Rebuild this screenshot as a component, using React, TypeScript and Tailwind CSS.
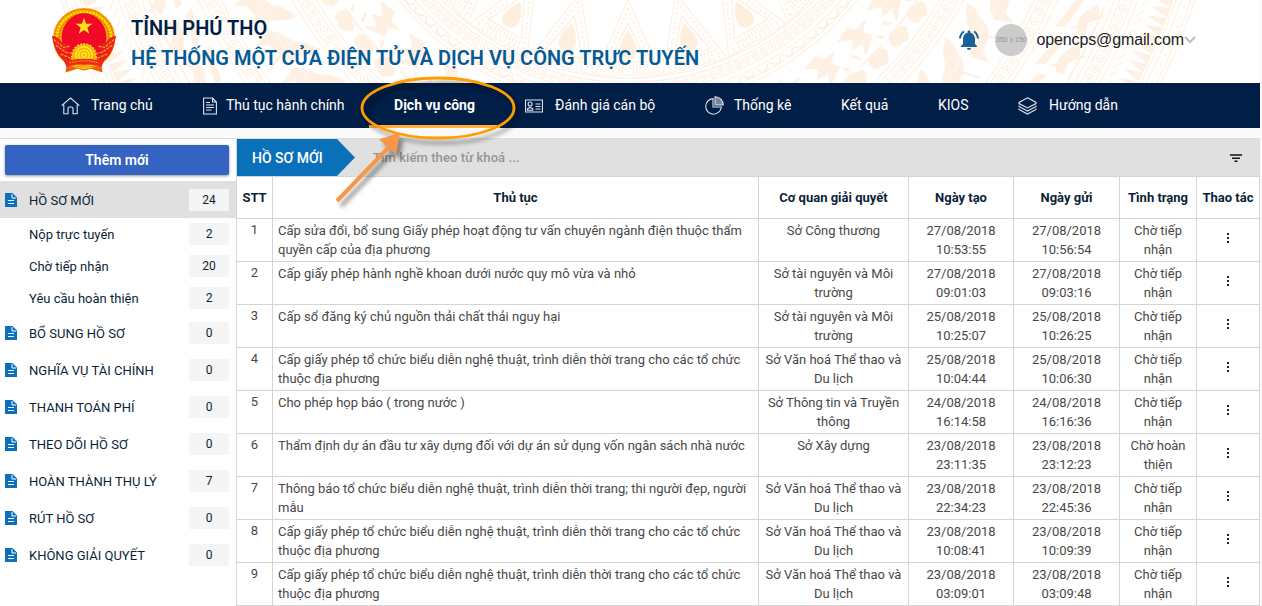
import React from "react";

const CX = 628;
const CY = -184;

function polar(r: number, deg: number): [number, number] {
  const a = (deg * Math.PI) / 180;
  return [CX + r * Math.sin(a), CY + r * Math.cos(a)];
}

function angles(step: number, max: number): number[] {
  const out: number[] = [];
  for (let a = -max; a <= max + 0.001; a += step) out.push(a);
  return out;
}

function Ring({ r, children, step, max = 74 }: { r: number; step: number; max?: number; children: React.ReactNode }) {
  return (
    <>
      {angles(step, max).map((a) => {
        const [x, y] = polar(r, a);
        if (y < -80 || y > 110) return null;
        return (
          <g key={a} transform={`translate(${x.toFixed(1)} ${y.toFixed(1)}) rotate(${(-a).toFixed(1)})`}>
            {children}
          </g>
        );
      })}
    </>
  );
}

function DrumPattern() {
  return (
    <svg className="absolute inset-0" width="1260" height="83" viewBox="0 0 1260 83" fill="none" stroke="#fef1e3" strokeWidth="1.2">
      {[262, 266, 277, 282, 290, 294, 362, 366, 378, 383, 446, 450, 462, 467, 520, 525, 537, 542, 578, 583, 592, 596].map((r) => (
        <circle key={r} cx={CX} cy={CY} r={r} />
      ))}
      <circle cx={CX} cy={CY} r="342" strokeWidth="2" strokeDasharray="30 12" />
      <Ring r={185} step={15} max={60}>
        <path d="M0 -2 L-33 74 H33 Z" />
        <path d="M0 8 L-27 71 H27 Z" strokeWidth="2.4" strokeDasharray="2 3" />
        <path d="M0 22 L-19 61 H19 Z" strokeWidth="1.5" />
        <path d="M0 30 C-12 48 -10 56 0 58 C10 56 12 48 0 30" fill="#feeedd" />
        <path d="M-20 66 H20" strokeWidth="6" strokeDasharray="1.5 2" />
      </Ring>
      <Ring r={271.5} step={2}>
        <circle r="3.4" />
        <circle r="1" />
      </Ring>
      <Ring r={286} step={3}>
        <path d="M-6 -2 L-2 3 H3 L7 -2" strokeWidth="2" />
      </Ring>
      <Ring r={322} step={8}>
        <path d="M-16 -14 L-4 -5 L-12 2 L0 4 L-7 15 L12 6 L7 -3 L17 -9 L4 -9 L0 -17 Z" fill="#fef1e3" />
        <path d="M14 10 L19 16 M-18 5 L-13 14" strokeWidth="3" />
      </Ring>
      <Ring r={350} step={5}>
        <path d="M-10 -5 C-14 2 -9 8 -3 5 C0 10 7 8 8 3 C14 1 10 -8 4 -6 C0 -11 -8 -10 -10 -5Z" fill="#fef1e3" strokeDasharray="2 1" />
      </Ring>
      <Ring r={372} step={1.6}>
        <circle r="3.6" />
        <circle r="1" />
      </Ring>
      <Ring r={414} step={6}>
        <path d="M-22 6 C-14 -8 -4 -4 2 -12 C8 -22 16 -22 20 -26 C22 -16 14 -12 13 -3 C10 8 -4 10 -12 10 L-18 22 M4 8 L10 24" fill="#fef1e3" strokeWidth="2.5" />
        <path d="M-18 0 C-8 0 4 2 12 -4" stroke="#fff" strokeDasharray="2 2" />
      </Ring>
      <Ring r={456} step={1.4}>
        <circle r="3.8" />
        <circle r="1.1" />
      </Ring>
      <Ring r={495} step={5}>
        <path d="M-18 -18 L16 -10 L18 -4 L-14 -10 Z M-16 4 C-4 -4 10 2 18 12 L8 16 C2 8 -6 8 -14 12 Z" fill="#fef1e3" />
        <path d="M-20 18 H20 M-14 -4 L12 22" strokeWidth="2" />
      </Ring>
      <Ring r={531} step={1.2}>
        <circle r="3.8" />
        <circle r="1.1" />
      </Ring>
      <Ring r={560} step={1}>
        <path d="M-4 15 L0 -2 L4 15 Z" fill="#fef1e3" />
        <path d="M-4 -14 L4 -8" />
      </Ring>
      <Ring r={588} step={1}>
        <circle r="0.8" />
      </Ring>
    </svg>
  );
}

function Emblem() {
  return (
    <svg width="68" height="68" viewBox="-1 -1.5 70 70" className="shrink-0">
      <path d="M17 50 L15 67 L27 63 L34 65 L41 63 L53 67 L51 50 Z" fill="#f25a12" />
      <ellipse cx="34" cy="32" rx="32" ry="31.5" fill="#f7a600" />
      <ellipse cx="34" cy="32" rx="30.5" ry="30" fill="none" stroke="#f04a10" strokeWidth="1" strokeDasharray="1.5 1.7" />
      <ellipse cx="34" cy="32" rx="28" ry="27.5" fill="none" stroke="#fff200" strokeWidth="2" strokeDasharray="2 1.4" />
      <ellipse cx="34" cy="32" rx="25.8" ry="25.4" fill="none" stroke="#e33a10" strokeWidth="1" strokeDasharray="2 1.5" />
      <ellipse cx="34" cy="31" rx="23" ry="25" fill="#f00a28" />
      <path d="M34 10.5 L36.1 16.7 H42.8 L37.4 20.6 L39.4 27 L34 23.2 L28.6 27 L30.6 20.6 L25.2 16.7 H31.9 Z" fill="#ffe21c" />
      <path d="M1 29 Q8 30 11 36 L21 39 L16 45 L22 50 L17 57 Q4 50 1 29Z M67 29 Q60 30 57 36 L47 39 L52 45 L46 50 L51 57 Q64 50 67 29Z" fill="#ee1c20" />
      <path d="M3 33 L13 41 L19 40 M5 39 L15 46 L21 47 M65 33 L55 41 L49 40 M63 39 L53 46 L47 47 M10 48 L20 52 M58 48 L48 52" stroke="#f9a51a" strokeWidth="1.3" fill="none" strokeDasharray="3 1" />
      <circle cx="34" cy="50" r="12.5" fill="#f9b010" stroke="#ffd91a" strokeWidth="1.6" strokeDasharray="2 1.4" />
      <g fill="none" stroke="#fff01f" strokeWidth="1.4">
        <circle cx="34" cy="49" r="8.5" />
        <circle cx="34" cy="49" r="5.4" />
        <circle cx="34" cy="49" r="2.3" />
      </g>
      <path d="M12 52 Q22 55 26 53 H42 Q46 55 56 52 L52 61 Q43 58 34 59 Q25 58 16 61 Z" fill="#ed2a18" />
      <path d="M19 57 Q34 53 49 57" stroke="#f59a18" strokeWidth="1.3" strokeDasharray="1.5 1" fill="none" />
      <path d="M25 61 H43" stroke="#f9a51a" strokeWidth="1.8" strokeDasharray="2 1" />
    </svg>
  );
}

const iconProps = {
  fill: "none",
  stroke: "#dfe5ef",
  strokeWidth: 1.1,
  className: "shrink-0",
};

const HomeIcon = () => (
  <svg width="19" height="18" viewBox="0 0 19 18" {...iconProps}>
    <path d="M0.6 8.6 L9.5 1 L18.4 8.6 M2.8 7.5 V16.7 H7 V11.5 Q7 10 8.5 10 H10.5 Q12 10 12 11.5 V16.7 H16.2 V7.5" />
  </svg>
);
const DocIcon = () => (
  <svg width="14" height="18" viewBox="0 0 14 18" {...iconProps}>
    <path d="M0.6 1 H9.5 L13.4 5 V17 H0.6 Z M9.5 1 V5 H13.4 M3 5.5 H7 M3 8 H11 M3 10.5 H11 M3 13 H8.5" />
  </svg>
);
const CardIcon = () => (
  <svg width="18" height="14" viewBox="0 0 18 14" {...iconProps}>
    <path d="M0.5 1 H17.5 V13 H0.5 Z M10.5 5 H15.5 M10.5 7.5 H15.5 M10.5 10 H15.5 M2.5 11.2 V9.8 L5 8.4 L7.8 9.8 V11.2 Z" />
    <circle cx="5.1" cy="5" r="2" />
  </svg>
);
const PieIcon = () => (
  <svg width="19" height="19" viewBox="0 0 19 19" {...iconProps}>
    <path d="M8 2.6 A7.8 7.8 0 1 0 16.3 11 H8 Z" />
    <path d="M10 0.8 A8 8 0 0 1 18.2 9 H10 Z" fill="#77849c" />
  </svg>
);
const LayersIcon = () => (
  <svg width="19" height="18" viewBox="0 0 19 18" {...iconProps}>
    <path d="M9.5 0.8 L18 5.4 V6.6 L9.5 11 L1 6.6 V5.4 Z M1 8.4 V9.4 L9.5 14 L18 9.4 V8.4 M1 11.4 V12.4 L9.5 17 L18 12.4 V11.4" />
  </svg>
);

const sidebar = [
  { label: "BỔ SUNG HỒ SƠ", count: 0 },
  { label: "NGHĨA VỤ TÀI CHÍNH", count: 0 },
  { label: "THANH TOÁN PHÍ", count: 0 },
  { label: "THEO DÕI HỒ SƠ", count: 0 },
  { label: "HOÀN THÀNH THỤ LÝ", count: 7 },
  { label: "RÚT HỒ SƠ", count: 0 },
  { label: "KHÔNG GIẢI QUYẾT", count: 0 },
];
const subItems = [
  { label: "Nộp trực tuyến", count: 2 },
  { label: "Chờ tiếp nhận", count: 20 },
  { label: "Yêu cầu hoàn thiện", count: 2 },
];

const FileIcon = () => (
  <svg width="12" height="14" viewBox="0 0 12 14" className="shrink-0">
    <path d="M0 0 H7.5 L12 4.5 V14 H0 Z" fill="#0b70ba" />
    <path d="M7 1 V5 H11" stroke="#fff" strokeWidth="1" fill="none" />
    <path d="M3 7.5 H9 M3 10.5 H9" stroke="#fff" strokeWidth="1.2" fill="none" />
  </svg>
);

function Count({ n }: { n: number }) {
  return (
    <span className="ml-auto flex h-[22px] w-10 items-center justify-center bg-[#f5f5f5] text-[12px] leading-[22px]">{n}</span>
  );
}

const perform = "Cấp giấy phép tổ chức biểu diễn nghệ thuật, trình diễn thời trang cho các tổ chức thuộc địa phương";
const culture = "Sở Văn hoá Thể thao và Du lịch";
const rows: string[][] = [
  ["Cấp sửa đổi, bổ sung Giấy phép hoạt động tư vấn chuyên ngành điện thuộc thẩm quyền cấp của địa phương", "Sở Công thương", "27/08/2018 10:53:55", "27/08/2018 10:56:54", "Chờ tiếp nhận"],
  ["Cấp giấy phép hành nghề khoan dưới nước quy mô vừa và nhỏ", "Sở tài nguyên và Môi trường", "27/08/2018 09:01:03", "27/08/2018 09:03:16", "Chờ tiếp nhận"],
  ["Cấp sổ đăng ký chủ nguồn thải chất thải nguy hại", "Sở tài nguyên và Môi trường", "25/08/2018 10:25:07", "25/08/2018 10:26:25", "Chờ tiếp nhận"],
  [perform, culture, "25/08/2018 10:04:44", "25/08/2018 10:06:30", "Chờ tiếp nhận"],
  ["Cho phép họp báo ( trong nước )", "Sở Thông tin và Truyền thông", "24/08/2018 16:14:58", "24/08/2018 16:16:36", "Chờ tiếp nhận"],
  ["Thẩm định dự án đầu tư xây dựng đối với dự án sử dụng vốn ngân sách nhà nước", "Sở Xây dựng", "23/08/2018 23:11:35", "23/08/2018 23:12:23", "Chờ hoàn thiện"],
  ["Thông báo tổ chức biểu diễn nghệ thuật, trình diễn thời trang; thi người đẹp, người mẫu", culture, "23/08/2018 22:34:23", "23/08/2018 22:45:36", "Chờ tiếp nhận"],
  [perform, culture, "23/08/2018 10:08:41", "23/08/2018 10:09:39", "Chờ tiếp nhận"],
  [perform, culture, "23/08/2018 03:09:01", "23/08/2018 03:09:48", "Chờ tiếp nhận"],
];
const heads = ["STT", "Thủ tục", "Cơ quan giải quyết", "Ngày tạo", "Ngày gửi", "Tình trạng", "Thao tác"];
const grid = "grid grid-cols-[36px_486px_150px_105px_106px_77px_63px]";
const cell = "border-l border-[#d4d4d4]";

export default function App() {
  return (
    <div className="relative h-[606px] w-[1262px] overflow-hidden bg-[#fafafa] font-['Roboto',sans-serif] text-[#0b1f38]">
      <div className="flex w-[1260px] flex-col">
        <header className="relative flex h-[83px] items-start overflow-hidden bg-white">
          <DrumPattern />
          <div className="relative flex w-full pt-[6px] pl-[50px]">
            <Emblem />
            <div className="ml-[13px] pt-[7px] text-[20px] leading-[30px] font-semibold">
              <div className="text-[#011e47]">TỈNH PHÚ THỌ</div>
              <div className="text-[#045a96]">HỆ THỐNG MỘT CỬA ĐIỆN TỬ VÀ DỊCH VỤ CÔNG TRỰC TUYẾN</div>
            </div>
            <div className="mt-[18px] mr-[64px] ml-auto flex h-8 items-center">
              <svg width="24" height="24" viewBox="0 0 24 24" fill="#17629b" className="mr-[14px]">
                <path d="M7.58 4.08 6.15 2.65C3.75 4.48 2.17 7.3 2.03 10.5h2c.15-2.65 1.51-4.97 3.55-6.42zm12.39 6.42h2c-.15-3.2-1.73-6.02-4.12-7.85l-1.42 1.43c2.02 1.45 3.39 3.77 3.54 6.42zM18 11c0-3.07-1.64-5.64-4.5-6.32V4c0-.83-.67-1.5-1.5-1.5s-1.5.67-1.5 1.5v.68C7.63 5.36 6 7.92 6 11v5l-2 2v1h16v-1l-2-2v-5zm-6 11c.14 0 .27-.01.4-.04.65-.14 1.18-.58 1.44-1.18.1-.24.15-.5.15-.78h-4c.01 1.1.9 2 2.01 2z" />
              </svg>
              <div className="flex size-8 items-center justify-center overflow-hidden rounded-full bg-[#ccc] font-['Liberation_Sans',sans-serif] text-[7px] whitespace-nowrap text-[#969696]">350 x 150</div>
              <span className="ml-[9px] font-['Liberation_Sans',sans-serif] text-[16px] tracking-[-0.12px] text-[#212121]">opencps@gmail.com</span>
              <svg width="12" height="8" viewBox="0 0 12 8" fill="none" stroke="#bcbcbc" strokeWidth="2"><path d="M1 1 L6 6 L11 1" /></svg>
            </div>
          </div>
        </header>

        <nav className="flex h-[45px] bg-[#011e47] pl-[61px] text-[14px] whitespace-nowrap text-white">
          <div className="flex w-[142px] items-center gap-[11px]"><HomeIcon />Trang chủ</div>
          <div className="flex w-[166px] items-center gap-[9px]"><DocIcon />Thủ tục hành chính</div>
          <div className="flex w-[131px] items-center justify-center border-b-[3px] border-[#ffb03c] pt-[3px] font-bold">Dịch vụ công</div>
          <div className="flex w-[205px] items-center gap-3 pl-[25px]"><CardIcon />Đánh giá cán bộ</div>
          <div className="flex w-[136px] items-center gap-[10px]"><PieIcon />Thống kê</div>
          <div className="flex w-[97px] items-center">Kết quả</div>
          <div className="flex w-[80px] items-center">KIOS</div>
          <div className="flex items-center gap-3"><LayersIcon />Hướng dẫn</div>
        </nav>

        <div className="h-[11px] border-b border-[#dcdcdc] bg-[#fafafa]" />

        <div className="flex h-[467px]">
          <aside className="w-[236px] shrink-0 bg-white text-[13px]">
            <div className="pt-[6px] pr-[7px] pb-[6px] pl-[5px]">
              <button className="h-[30px] w-full rounded-[2px] bg-[#3563c1] text-[14px] font-semibold text-white shadow-[0_1px_3px_rgba(0,0,0,0.45)]">Thêm mới</button>
            </div>
            <div className="flex h-[37px] items-center bg-[#e0e0e0] pt-px pr-[7px] pl-[5px]">
              <FileIcon /><span className="ml-3 pt-px">HỒ SƠ MỚI</span><Count n={24} />
            </div>
            {subItems.map((s) => (
              <div key={s.label} className="flex h-8 items-center pr-[7px] pl-[29px]">
                <span className="pt-px">{s.label}</span><Count n={s.count} />
              </div>
            ))}
            {sidebar.map((s) => (
              <div key={s.label} className="flex h-[37px] items-center pt-px pr-[7px] pl-[5px]">
                <FileIcon /><span className="ml-3 pt-px">{s.label}</span><Count n={s.count} />
              </div>
            ))}
          </aside>

          <main className="flex-1 bg-white">
            <div className="flex h-[37px] items-center border-l border-[#d4d4d4] bg-[#e0e0e0]">
              <div className="flex h-full w-[118px] items-center bg-[#0b70ba] pt-[2px] pl-[15px] text-[14px] font-medium text-white [clip-path:polygon(0_0,100px_0,118px_50%,100px_100%,0_100%)]">HỒ SƠ MỚI</div>
              <span className="ml-[18px] text-[13px] font-medium tracking-[0.08px] text-[#959595]">Tìm kiếm theo từ khoá ...</span>
              <svg width="12" height="8" viewBox="0 0 12 8" className="mr-[18px] ml-auto" stroke="#111" strokeWidth="1.6"><path d="M0 1 H12 M2 4.2 H10 M4.5 7.2 H7.5" /></svg>
            </div>
            <div className="w-[1024px] border-r border-[#d4d4d4]">
              <div className={`${grid} h-[43px] border-y border-[#d4d4d4] text-[13px] font-bold`}>
                {heads.map((h) => (
                  <div key={h} className={`${cell} flex items-center justify-center whitespace-nowrap`}>{h}</div>
                ))}
              </div>
              {rows.map((r, i) => (
                <div key={i} className={`${grid} h-[43px] border-b border-[#d4d4d4] text-[13px] leading-[19px] text-[#484848]`}>
                  <div className={`${cell} pt-px text-center`}>{i + 1}</div>
                  <div className={`${cell} pt-[2px] pr-[8px] pl-[5px]`}>{r[0]}</div>
                  <div className={`${cell} px-[5px] pt-[2px] text-center`}>{r[1]}</div>
                  <div className={`${cell} px-[15px] pt-[2px] text-center`}>{r[2]}</div>
                  <div className={`${cell} px-[15px] pt-[2px] text-center`}>{r[3]}</div>
                  <div className={`${cell} px-[5px] pt-[2px] text-center`}>{r[4]}</div>
                  <div className={`${cell} flex flex-col items-center justify-center gap-[2px] pb-[4px]`}>
                    <i className="size-[2px] bg-[#222]" /><i className="size-[2px] bg-[#222]" /><i className="size-[2px] bg-[#222]" />
                  </div>
                </div>
              ))}
            </div>
          </main>
        </div>
      </div>

      <svg className="pointer-events-none absolute top-[60px] left-[320px] [filter:drop-shadow(4px_5px_2px_rgba(0,0,0,0.4))]" width="220" height="160" viewBox="320 60 220 160">
        <ellipse cx="438" cy="108" rx="76" ry="30" fill="none" stroke="#ff9c00" strokeWidth="2.8" />
        <path d="M337 201 L389 147" stroke="#f79646" strokeWidth="4" />
        <path d="M400 132.5 L379 139.5 L396 154.5 Z" fill="#f79646" />
      </svg>
    </div>
  );
}
